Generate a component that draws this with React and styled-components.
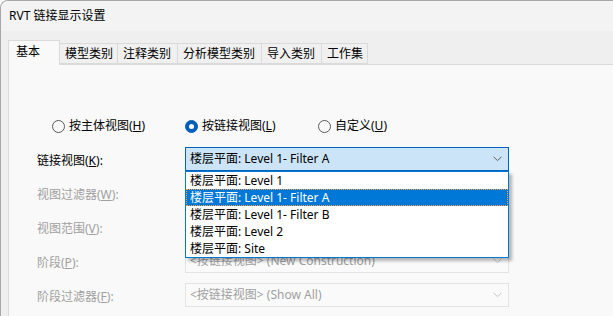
import React from "react";
import styled, { createGlobalStyle } from "styled-components";

const Global = createGlobalStyle`
  html, body { margin: 0; padding: 0; background: #f9f9f9; }
  body {
    font-family: "Noto Sans", "Noto Sans CJK SC", sans-serif;
    font-size: 12px;
    color: #000;
  }
  * { box-sizing: border-box; }
`;

const Window = styled.div`
  width: 613px;
  height: 316px;
  overflow: hidden;
  border-top: 1px solid #a8a8a8;
  border-left: 1px solid #a8a8a8;
  border-top-left-radius: 8px;
  background: #efefef;
  display: flex;
  flex-direction: column;
`;

const TitleBar = styled.div`
  height: 30px;
  flex: none;
  background: #f3f3f3;
  display: flex;
  align-items: center;
  padding-left: 8px;
  font-size: 12px;
  line-height: 16px;
`;

const TabStrip = styled.div`
  height: 33px;
  flex: none;
  display: flex;
  align-items: flex-end;
  padding-left: 7px;
  background: #efefef;
`;

const Tab = styled.div`
  position: relative;
  height: ${(p) => (p.$active ? "25px" : "21px")};
  margin-bottom: ${(p) => (p.$active ? "-1px" : "0")};
  margin-left: ${(p) => (p.$first ? "0" : "-1px")};
  width: ${(p) => p.$w}px;
  padding-left: ${(p) => (p.$active ? "7px" : "5px")};
  padding-top: ${(p) => (p.$active ? "3px" : "2px")};
  background: ${(p) => (p.$active ? "#f9f9f9" : "#f0f0f0")};
  border: 1px solid #dadada;
  border-bottom: ${(p) => (p.$active ? "none" : "1px solid #dadada")};
  z-index: ${(p) => (p.$active ? 2 : 1)};
  line-height: 16px;
  white-space: nowrap;
`;

const Panel = styled.div`
  flex: 1;
  margin-left: 7px;
  background: #f9f9f9;
  border-top: 1px solid #dadada;
  border-left: 1px solid #dadada;
  padding-top: 53px;
`;

const RadioRow = styled.div`
  display: flex;
  padding-left: 43px;
  height: 16px;
`;

const RadioItem = styled.label`
  width: 133px;
  display: flex;
  align-items: center;
  gap: 4px;
  line-height: 16px;
  white-space: nowrap;
`;

const RadioCircle = styled.span`
  width: 13px;
  height: 13px;
  border-radius: 50%;
  flex: none;
  display: flex;
  align-items: center;
  justify-content: center;
  border: 1px solid ${(p) => (p.$on ? "#005fb8" : "#5a5a5a")};
  background: ${(p) => (p.$on ? "#005fb8" : "#f9f9f9")};
  &::after {
    content: "";
    display: ${(p) => (p.$on ? "block" : "none")};
    width: 5px;
    height: 5px;
    border-radius: 50%;
    background: #fff;
  }
`;

const Form = styled.div`
  margin-top: 13px;
  padding-left: 28px;
  display: grid;
  grid-template-columns: 148px 324px;
  grid-auto-rows: 24px;
  row-gap: 10px;
  align-items: center;
`;

const Label = styled.div`
  line-height: 16px;
  padding-top: 3px;
  color: ${(p) => (p.$disabled ? "#a0a0a0" : "#000")};
  white-space: nowrap;
`;

const ComboWrap = styled.div`
  position: relative;
  height: 24px;
`;

const Combo = styled.div`
  height: 24px;
  display: flex;
  align-items: center;
  padding: 0 5px 0 4px;
  border: 1px solid ${(p) => (p.$open ? "#0063b8" : "#e3e3e3")};
  background: ${(p) => (p.$open ? "#cce4f7" : "#fafafa")};
  color: ${(p) => (p.$open ? "#000" : "#a0a0a0")};
  line-height: 16px;
  white-space: nowrap;
`;

const ComboText = styled.span`
  flex: 1;
  overflow: hidden;
`;

const Chevron = ({ color }) => (
  <svg width="9" height="6" viewBox="0 0 9 6" style={{ flex: "none", marginRight: 1 }}>
    <polyline points="0.5,0.8 4.5,4.6 8.5,0.8" fill="none" stroke={color} strokeWidth="1" />
  </svg>
);

const List = styled.div`
  position: absolute;
  top: 24px;
  left: 0;
  width: 324px;
  background: #fff;
  border: 1px solid #0078d7;
  box-shadow: 3px 3px 3px rgba(0, 0, 0, 0.28);
  z-index: 5;
`;

const Item = styled.div`
  height: 17px;
  line-height: 17px;
  padding-left: 4px;
  white-space: nowrap;
  background: ${(p) => (p.$sel ? "#0078d7" : "#fff")};
  color: ${(p) => (p.$sel ? "#fff" : "#000")};
  outline: ${(p) => (p.$sel ? "1px dotted #f7a14a" : "none")};
  outline-offset: -1px;
`;

const tabs = [
  { t: "基本", w: 52, active: true },
  { t: "模型类别", w: 59 },
  { t: "注释类别", w: 61 },
  { t: "分析模型类别", w: 85 },
  { t: "导入类别", w: 61 },
  { t: "工作集", w: 47 },
];

const items = [
  "楼层平面: Level 1",
  "楼层平面: Level 1- Filter A",
  "楼层平面: Level 1- Filter B",
  "楼层平面: Level 2",
  "楼层平面: Site",
];

const rows = [
  { label: <>视图过滤器(<u>W</u>):</>, value: "" },
  { label: <>视图范围(<u>V</u>):</>, value: "" },
  { label: <>阶段(<u>P</u>):</>, value: "<按链接视图> (New Construction)" },
  { label: <>阶段过滤器(<u>F</u>):</>, value: "<按链接视图> (Show All)" },
];

export default function App() {
  return (
    <>
      <Global />
      <Window>
        <TitleBar>RVT 链接显示设置</TitleBar>
        <TabStrip>
          {tabs.map((t, i) => (
            <Tab key={t.t} $active={t.active} $first={i === 0} $w={t.w}>
              {t.t}
            </Tab>
          ))}
        </TabStrip>
        <Panel>
          <RadioRow>
            <RadioItem>
              <RadioCircle />
              <span>按主体视图(<u>H</u>)</span>
            </RadioItem>
            <RadioItem>
              <RadioCircle $on />
              <span>按链接视图(<u>L</u>)</span>
            </RadioItem>
            <RadioItem>
              <RadioCircle />
              <span>自定义(<u>U</u>)</span>
            </RadioItem>
          </RadioRow>
          <Form>
            <Label>链接视图(<u>K</u>):</Label>
            <ComboWrap>
              <Combo $open>
                <ComboText>楼层平面: Level 1- Filter A</ComboText>
                <Chevron color="#5f5f5f" />
              </Combo>
              <List>
                {items.map((it, i) => (
                  <Item key={it} $sel={i === 1}>
                    {it}
                  </Item>
                ))}
              </List>
            </ComboWrap>
            {rows.map((r, i) => (
              <React.Fragment key={i}>
                <Label $disabled>{r.label}</Label>
                <ComboWrap>
                  <Combo>
                    <ComboText>{r.value}</ComboText>
                    <Chevron color="#c4c4c4" />
                  </Combo>
                </ComboWrap>
              </React.Fragment>
            ))}
          </Form>
        </Panel>
      </Window>
    </>
  );
}
